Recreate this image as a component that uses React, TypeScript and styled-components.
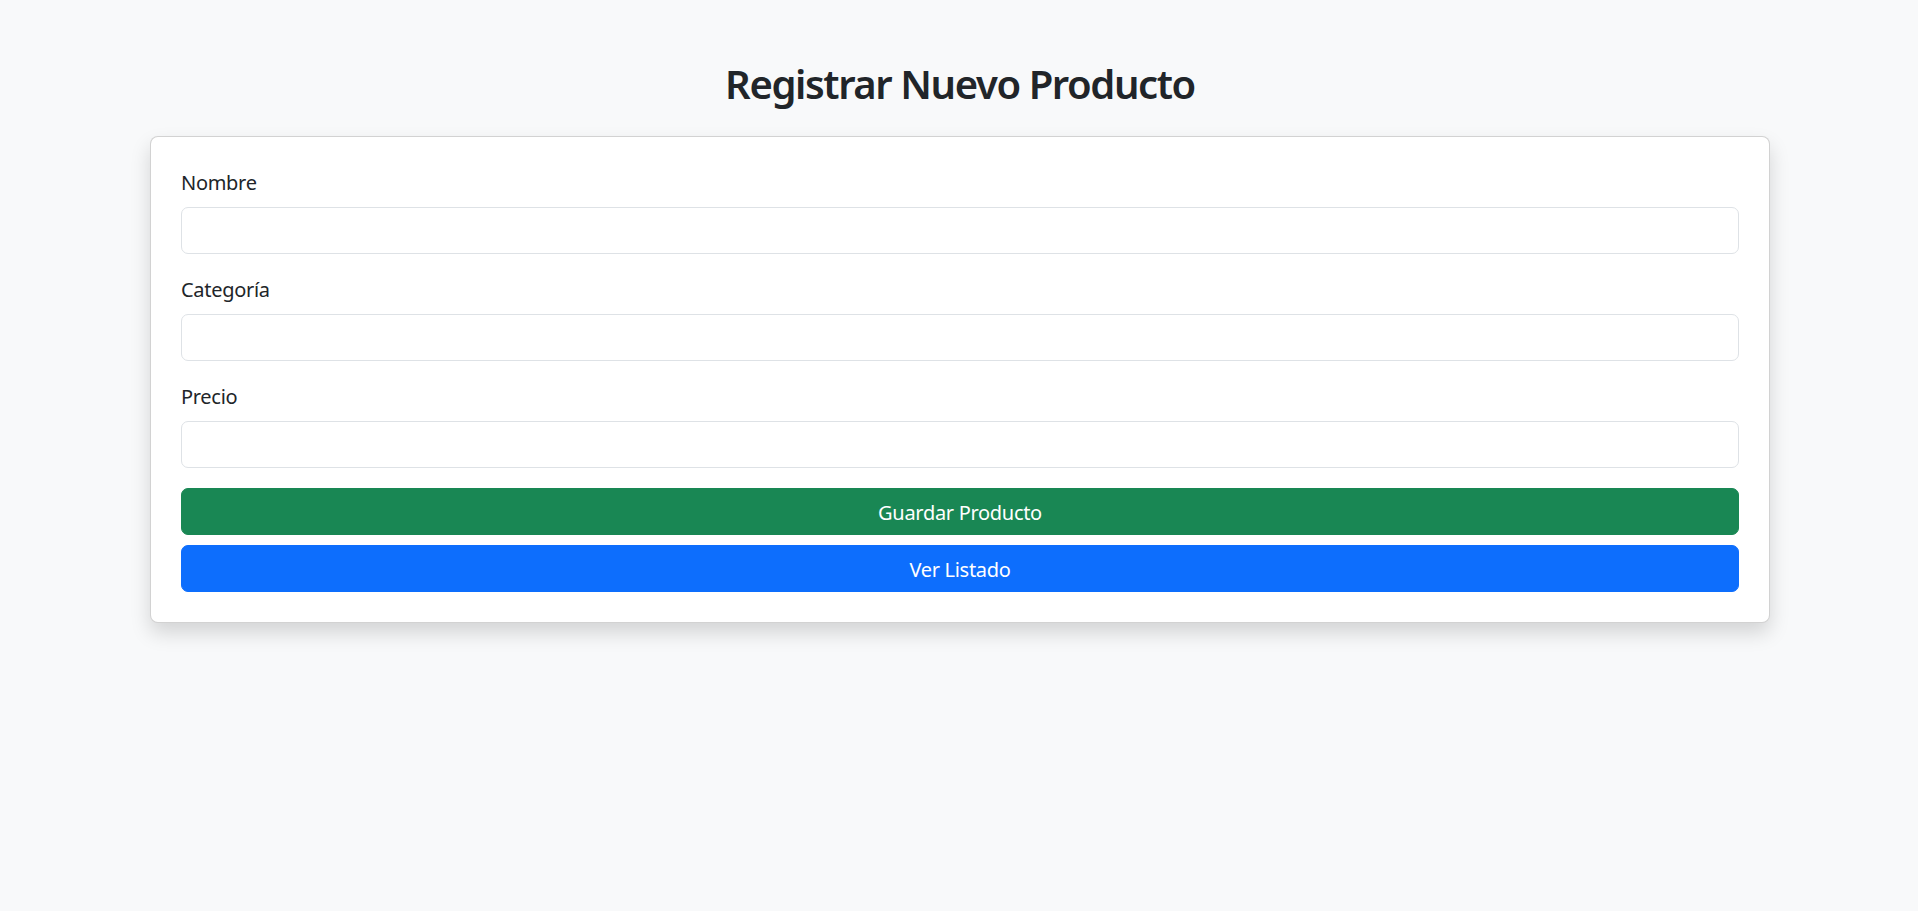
import styled, { createGlobalStyle } from "styled-components";

const GlobalStyle = createGlobalStyle`
  html, body {
    margin: 0;
    padding: 0;
    background: #f8f9fa;
    color: #212529;
    font-family: "Noto Sans", "Liberation Sans", sans-serif;
    font-size: 20px;
    line-height: 1.5;
  }
  * {
    box-sizing: border-box;
  }
`;

const Page = styled.main`
  max-width: 1650px;
  margin: 0 auto;
  padding: 60px 14px 40px 16px;
`;

const Title = styled.h2`
  margin: 0 0 28px;
  font-size: 40px;
  font-weight: 600;
  line-height: 1.2;
  letter-spacing: -1.4px;
  text-align: center;
`;

const Card = styled.form`
  display: flex;
  flex-direction: column;
  padding: 30px;
  background: #fff;
  border: 1px solid rgba(0, 0, 0, 0.175);
  border-radius: 8px;
  box-shadow: 0 10px 20px rgba(0, 0, 0, 0.15);
`;

const Field = styled.div`
  display: flex;
  flex-direction: column;
  margin-bottom: 20px;
`;

const Label = styled.label`
  padding-top: 1px;
  margin-bottom: 9px;
  font-size: 20px;
  line-height: 30px;
  letter-spacing: -0.3px;
`;

const Input = styled.input`
  height: 47px;
  padding: 7px 15px;
  font: inherit;
  color: #212529;
  background: #fff;
  border: 1px solid #dee2e6;
  border-radius: 7px;
  outline: none;
`;

const Button = styled.button<{ $tone: "success" | "primary" }>`
  height: 47px;
  padding: 2px 15px 0;
  font: inherit;
  line-height: 30px;
  letter-spacing: -0.3px;
  color: #fff;
  background: ${(p) => (p.$tone === "success" ? "#198754" : "#0d6efd")};
  border: 1px solid ${(p) => (p.$tone === "success" ? "#198754" : "#0d6efd")};
  border-radius: 7px;
  cursor: pointer;

  & + & {
    margin-top: 10px;
  }
`;

const fields = [
  { id: "nombre", label: "Nombre", type: "text" },
  { id: "categoria", label: "Categoría", type: "text" },
  { id: "precio", label: "Precio", type: "number" },
];

export default function App() {
  return (
    <>
      <GlobalStyle />
      <Page>
        <Title>Registrar Nuevo Producto</Title>
        <Card onSubmit={(e) => e.preventDefault()}>
          {fields.map((f) => (
            <Field key={f.id}>
              <Label htmlFor={f.id}>{f.label}</Label>
              <Input id={f.id} type={f.type} />
            </Field>
          ))}
          <Button type="submit" $tone="success">Guardar Producto</Button>
          <Button type="button" $tone="primary">Ver Listado</Button>
        </Card>
      </Page>
    </>
  );
}
